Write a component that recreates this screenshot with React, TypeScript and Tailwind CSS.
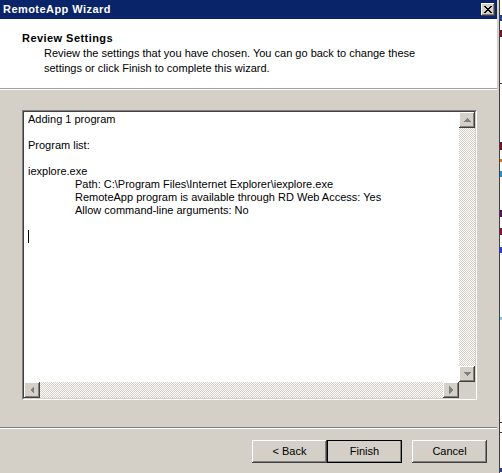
import type { ReactNode } from 'react';

const FONT = { fontFamily: '"Liberation Sans", Arial, sans-serif' };

const RAISED =
  'shadow-[inset_-1px_-1px_0_#404040,inset_1px_1px_0_#ffffff,inset_-2px_-2px_0_#808080,inset_2px_2px_0_#d4d0c8]';

const CHECKER =
  'bg-[repeating-conic-gradient(#d4d0c8_0_25%,#ffffff_0_50%)] bg-[length:2px_2px]';

function Arrow({ dir }: { dir: 'up' | 'down' | 'left' | 'right' }) {
  const pts = {
    up: '4,1 0,5 8,5',
    down: '0,1 8,1 4,5',
    left: '5,0 5,8 1,4',
    right: '1,0 1,8 5,4',
  }[dir];
  const vertical = dir === 'up' || dir === 'down';
  return (
    <svg
      width={vertical ? 8 : 6}
      height={vertical ? 6 : 8}
      viewBox={vertical ? '0 0 8 6' : '0 0 6 8'}
      shapeRendering="crispEdges"
    >
      <polygon points={pts} fill="#808080" />
    </svg>
  );
}

function ScrollButton({ dir }: { dir: 'up' | 'down' | 'left' | 'right' }) {
  return (
    <div className={`flex h-4 w-4 shrink-0 items-center justify-center bg-[#d4d0c8] ${RAISED}`}>
      <Arrow dir={dir} />
    </div>
  );
}

function WizardButton({ children, isDefault }: { children: ReactNode; isDefault?: boolean }) {
  return (
    <div
      className={`flex h-[23px] w-[75px] items-center justify-center bg-[#d4d0c8] text-[11px] text-black ${RAISED} ${
        isDefault ? 'outline outline-1 -outline-offset-1 outline-black' : ''
      }`}
    >
      {children}
    </div>
  );
}

const LINES = [
  'Adding 1 program',
  '',
  'Program list:',
  '',
  'iexplore.exe',
  '\tPath: C:\\Program Files\\Internet Explorer\\iexplore.exe',
  '\tRemoteApp program is available through RD Web Access: Yes',
  '\tAllow command-line arguments: No',
  '',
];

// bits of the window behind the dialog, showing at the right edge: [top, height, colour]
const BEHIND: [number, number, string][] = [
  [15, 6, '#1e3fa0'],
  [30, 7, '#7a1030'],
  [83, 1, '#404040'],
  [142, 8, '#7a1030'],
  [159, 3, '#e07020'],
  [171, 6, '#1e90d0'],
  [210, 7, '#5a1060'],
  [228, 7, '#8a1040'],
  [247, 6, '#2040e0'],
  [317, 3, '#80c8f0'],
  [422, 1, '#404040'],
  [432, 1, '#404040'],
  [468, 4, '#1e3fa0'],
];

export default function App() {
  return (
    <div className="flex h-[473px] w-[502px] overflow-hidden bg-white" style={FONT}>
      {/* dialog */}
      <div className="flex w-[497px] shrink-0 flex-col bg-[#d4d0c8]">
        {/* title bar */}
        <div className="flex h-[19px] items-center justify-between bg-[#0a246a] pl-[3px] pr-[2px]">
          <span className="text-[11px] font-bold tracking-[0.45px] text-white">RemoteApp Wizard</span>
          <div className={`flex h-[13px] w-[14px] items-center justify-center bg-[#d4d0c8] ${RAISED}`}>
            <svg width="8" height="7" viewBox="0 0 8 7" shapeRendering="crispEdges">
              <path d="M0 0h2v1h-2zM6 0h2v1h-2zM1 1h2v1h-2zM5 1h2v1h-2zM2 2h4v1h-4zM3 3h2v1h-2zM2 4h4v1h-4zM1 5h2v1h-2zM5 5h2v1h-2zM0 6h2v1h-2zM6 6h2v1h-2z" fill="#000" />
            </svg>
          </div>
        </div>

        {/* header */}
        <div className="h-[69px] bg-white pl-[22px] pt-[12px] text-[11px] leading-[15px] text-black">
          <div className="font-bold tracking-[0.45px]">Review Settings</div>
          <div className="pl-[22px]">
            Review the settings that you have chosen. You can go back to change these
            <br />
            settings or click Finish to complete this wizard.
          </div>
        </div>
        <div className="h-px bg-[#a0a0a0]" />
        <div className="h-px bg-white" />

        {/* body */}
        <div className="flex h-[337px] flex-col pl-[22px] pt-[20px]">
          <div className="h-[290px] w-[455px] border-t border-l border-t-[#808080] border-l-[#808080] border-b border-r border-b-white border-r-white">
            <div className="grid h-full grid-cols-[1fr_16px] grid-rows-[1fr_16px] border-t border-l border-t-[#404040] border-l-[#404040] border-b border-r border-b-[#d4d0c8] border-r-[#d4d0c8]">
              <div className="bg-white pl-[4px] pt-[1px] text-[11px] leading-[13px] text-black">
                {LINES.map((l, i) => (
                  <div key={i} className="h-[13px] whitespace-pre">
                    {l.startsWith('\t') ? <span className="pl-[47px]">{l.slice(1)}</span> : l}
                  </div>
                ))}
                <div className="h-[13px] w-px bg-black" />
              </div>
              <div className="flex flex-col">
                <ScrollButton dir="up" />
                <div className={`flex-1 ${CHECKER}`} />
                <ScrollButton dir="down" />
              </div>
              <div className="flex">
                <ScrollButton dir="left" />
                <div className={`flex-1 ${CHECKER}`} />
                <ScrollButton dir="right" />
              </div>
              <div className="bg-[#d4d0c8]" />
            </div>
          </div>
        </div>

        <div className="h-px bg-[#808080]" />
        <div className="h-px bg-white" />

        {/* buttons */}
        <div className="flex justify-end pr-[10px] pt-[11px]">
          <WizardButton>&lt; Back</WizardButton>
          <WizardButton isDefault>Finish</WizardButton>
          <div className="w-[10px]" />
          <WizardButton>Cancel</WizardButton>
        </div>
      </div>

      {/* window edge and what lies behind it */}
      <div className="w-[2px] shrink-0 bg-[#d4d0c8]" />
      <div className="w-px shrink-0 bg-[#404040]" />
      <div className="relative w-[2px] shrink-0 bg-white">
        {BEHIND.map(([top, h, c]) => (
          <div
            key={top}
            className="absolute left-0 w-[2px]"
            style={{ top, height: h, backgroundColor: c }}
          />
        ))}
      </div>
    </div>
  );
}
